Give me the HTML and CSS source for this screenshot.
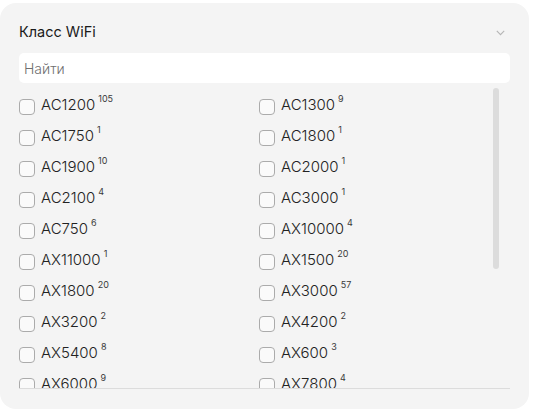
FILE: index.html
```html
<!DOCTYPE html>
<html lang="ru">
<head>
<meta charset="utf-8">
<link rel="stylesheet" href="styles.css">
</head>
<body>
<div class="card">
  <div class="header">
    <span class="title">Класс WiFi</span>
    <svg class="chevron" width="9" height="6" viewBox="0 0 9 6"><path d="M0.8 0.8 L4.5 4.6 L8.2 0.8" fill="none" stroke="#b5b5b5" stroke-width="1.1"/></svg>
  </div>
  <input class="search" type="text" placeholder="Найти">
  <div class="list-wrap">
    <div class="list">
      <label class="item"><span class="box"></span><span class="name">AC1200</span><sup class="count">105</sup></label>
      <label class="item"><span class="box"></span><span class="name">AC1300</span><sup class="count">9</sup></label>
      <label class="item"><span class="box"></span><span class="name">AC1750</span><sup class="count">1</sup></label>
      <label class="item"><span class="box"></span><span class="name">AC1800</span><sup class="count">1</sup></label>
      <label class="item"><span class="box"></span><span class="name">AC1900</span><sup class="count">10</sup></label>
      <label class="item"><span class="box"></span><span class="name">AC2000</span><sup class="count">1</sup></label>
      <label class="item"><span class="box"></span><span class="name">AC2100</span><sup class="count">4</sup></label>
      <label class="item"><span class="box"></span><span class="name">AC3000</span><sup class="count">1</sup></label>
      <label class="item"><span class="box"></span><span class="name">AC750</span><sup class="count">6</sup></label>
      <label class="item"><span class="box"></span><span class="name">AX10000</span><sup class="count">4</sup></label>
      <label class="item"><span class="box"></span><span class="name">AX11000</span><sup class="count">1</sup></label>
      <label class="item"><span class="box"></span><span class="name">AX1500</span><sup class="count">20</sup></label>
      <label class="item"><span class="box"></span><span class="name">AX1800</span><sup class="count">20</sup></label>
      <label class="item"><span class="box"></span><span class="name">AX3000</span><sup class="count">57</sup></label>
      <label class="item"><span class="box"></span><span class="name">AX3200</span><sup class="count">2</sup></label>
      <label class="item"><span class="box"></span><span class="name">AX4200</span><sup class="count">2</sup></label>
      <label class="item"><span class="box"></span><span class="name">AX5400</span><sup class="count">8</sup></label>
      <label class="item"><span class="box"></span><span class="name">AX600</span><sup class="count">3</sup></label>
      <label class="item"><span class="box"></span><span class="name">AX6000</span><sup class="count">9</sup></label>
      <label class="item"><span class="box"></span><span class="name">AX7800</span><sup class="count">4</sup></label>
    </div>
    <div class="scrollbar"></div>
  </div>
</div>
</body>
</html>
```
FILE: styles.css
```css
html, body {
  margin: 0;
  padding: 0;
  background: #ffffff;
}
body {
  font-family: Inter, "Noto Sans", sans-serif;
  color: #222222;
}
.card {
  box-sizing: border-box;
  width: 529px;
  height: 406px;
  margin-top: 3px;
  padding: 19px 19px 0 19px;
  background: #f4f4f4;
  border-radius: 16px;
}
.header {
  display: flex;
  align-items: center;
  justify-content: space-between;
  height: 20px;
}
.title {
  font-size: 14.5px;
  font-weight: 400;
  line-height: 20px;
  color: #1a1a1a;
}
.chevron {
  margin-right: 5px;
  margin-top: 2px;
}
.search {
  display: block;
  box-sizing: border-box;
  width: 100%;
  height: 30px;
  margin-top: 11px;
  padding: 0 5px;
  border: none;
  border-radius: 5px;
  background: #ffffff;
  font-family: Inter, "Noto Sans", sans-serif;
  font-size: 14px;
  font-weight: 300;
  color: #222;
  outline: none;
}
.search::placeholder {
  color: #6f6f6f;
}
.list-wrap {
  position: relative;
  margin-top: 5px;
  height: 300px;
  overflow: hidden;
  border-bottom: 1px solid #dcdcdc;
}
.list {
  display: grid;
  grid-template-columns: 240px 240px;
  grid-auto-rows: 31px;
  padding-top: 3px;
}
.item {
  display: flex;
  align-items: center;
  font-size: 15px;
  line-height: 20px;
}
.box {
  box-sizing: border-box;
  width: 16px;
  height: 16px;
  border: 1px solid #ababab;
  border-radius: 4px;
  background: #fafafa;
  margin-right: 6px;
  flex: none;
}
.name {
  color: #222222;
  font-weight: 300;
  margin-bottom: 3px;
}
.count {
  font-size: 9px;
  line-height: 1;
  color: #3a3a3a;
  margin-left: 3px;
  align-self: flex-start;
  margin-top: 3px;
}
.scrollbar {
  position: absolute;
  top: 0;
  left: 474px;
  width: 6px;
  height: 181px;
  border-radius: 3px;
  background: #dcdcdc;
}
```
